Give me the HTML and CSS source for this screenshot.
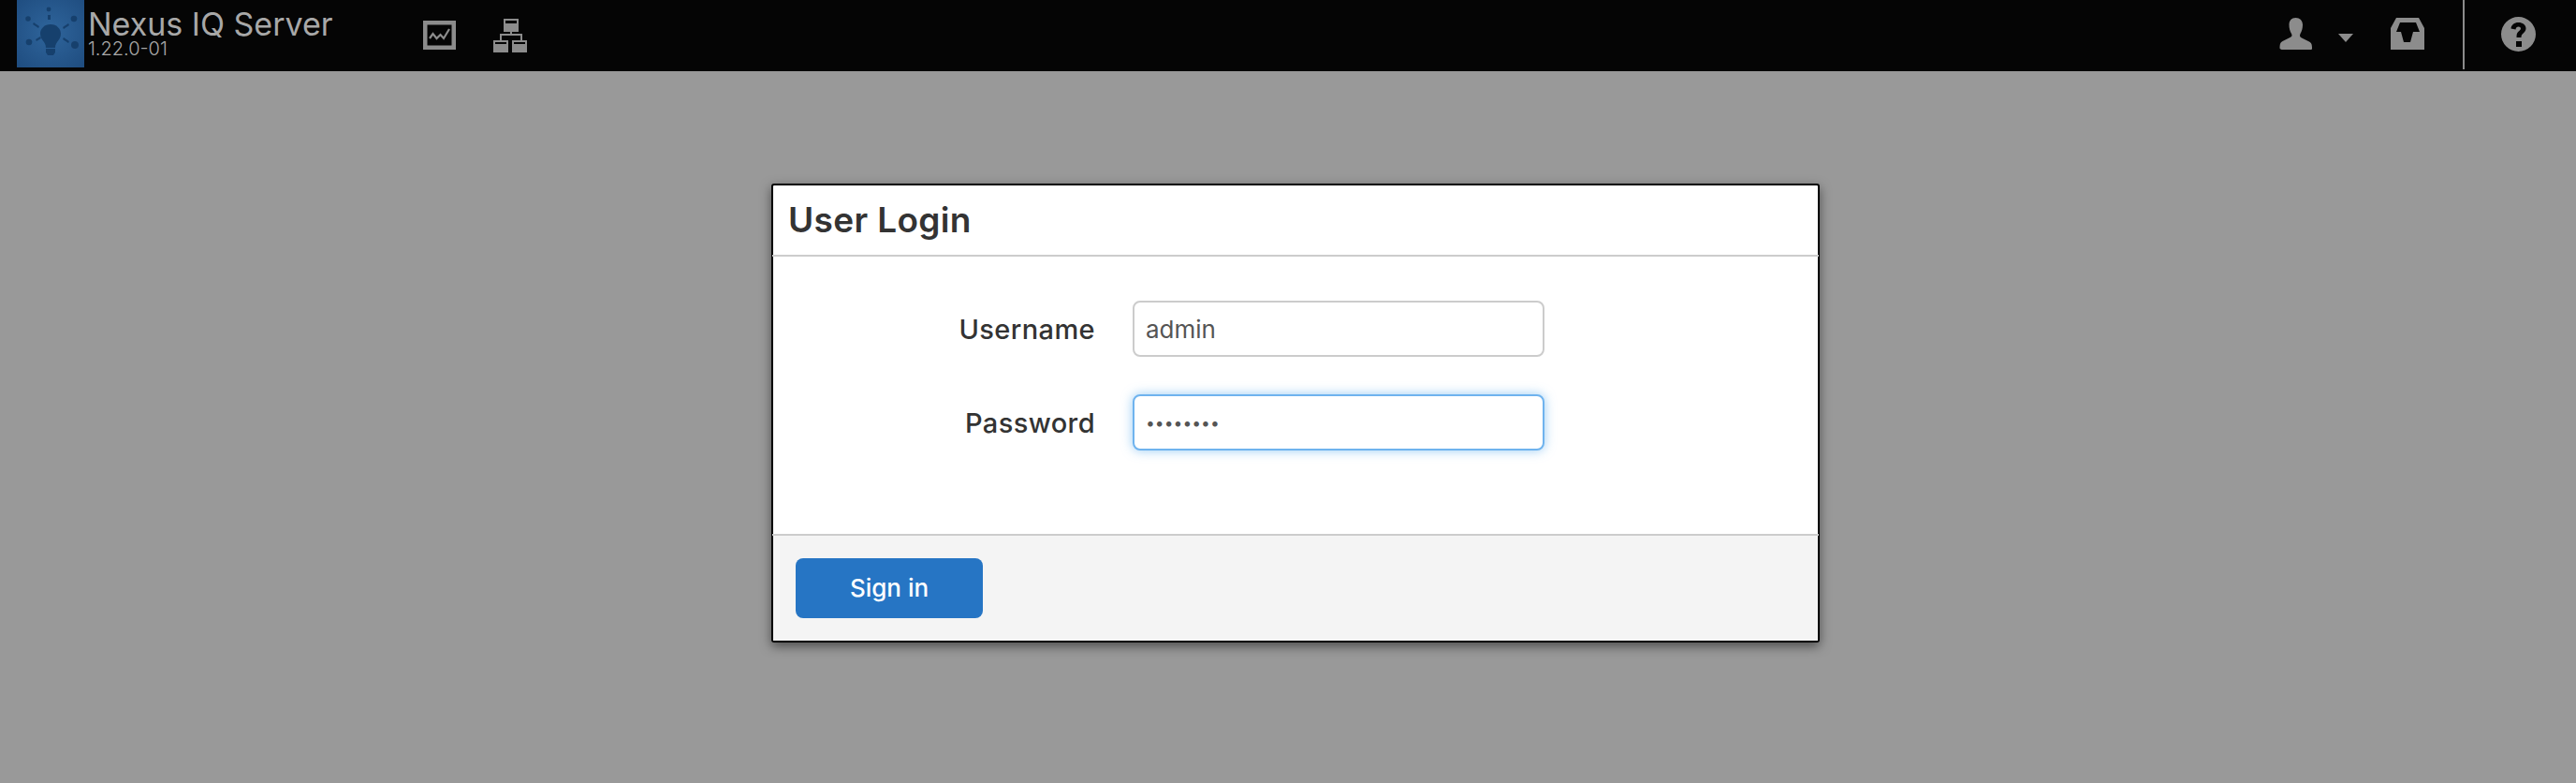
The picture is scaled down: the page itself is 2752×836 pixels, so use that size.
FILE: index.html
```html
<!DOCTYPE html>
<html lang="en">
<head>
<meta charset="utf-8">
<title>Nexus IQ Server</title>
<link rel="stylesheet" href="styles.css">
</head>
<body>
<header class="topbar">
  <div class="brand">
    <svg class="logo" viewBox="0 0 72 72" aria-hidden="true">
      <defs>
        <radialGradient id="lg" cx="50%" cy="48%" r="70%">
          <stop offset="0" stop-color="#2f659c"/>
          <stop offset="1" stop-color="#1f4d80"/>
        </radialGradient>
        <filter id="bl"><feGaussianBlur stdDeviation="0.7"/></filter>
      </defs>
      <rect width="72" height="72" fill="url(#lg)"/>
      <g fill="#17406d" filter="url(#bl)">
        <path d="M36 26c-7 0-11 5-11 10 0 4 2 6 4 9 1.500 2 2 4 2 6h10c0-2 .5-4 2-6 2-3 4-5 4-9 0-5-4-10-11-10z"/>
        <path d="M31 52h10v4l-2 3h-6l-2-3z"/>
        <circle cx="34" cy="10" r="2.400"/>
        <rect x="33" y="16" width="3" height="5"/>
        <circle cx="12" cy="20" r="2.800"/>
        <circle cx="61" cy="20" r="3.300"/>
        <circle cx="13" cy="45" r="3.300"/>
        <circle cx="62" cy="48" r="4"/>
        <path d="M18 24l6 4-1 2-6-4z"/>
        <path d="M49 29l6-4 1 2-6 4z"/>
        <path d="M20 42l5-3 1 2-5 3z"/>
        <path d="M50 40l6 4-1 2-6-4z"/>
      </g>
    </svg>
    <div class="brand-text">
      <span class="brand-name">Nexus IQ Server</span>
      <span class="brand-version">1.22.0-01</span>
    </div>
  </div>
  <nav class="nav-main">
    <svg class="icon i-chart" viewBox="0 0 35 31" aria-hidden="true">
      <path fill="#8c8c8c" fill-rule="evenodd" d="M0 0h35v31H0zM4.500 4.500v22h26v-22z"/>
      <path fill="none" stroke="#8c8c8c" stroke-width="2.200" d="M7 19l3.500-5 4 5 4-4 3.500 4 6-10"/>
    </svg>
    <svg class="icon i-tree" viewBox="0 0 36 36" aria-hidden="true">
      <path fill="#8c8c8c" fill-rule="evenodd" d="M11 0h16v14H11zM13 2v3h12V2zM0 23h16v13H0zM2 25v2h12v-2zM20 23h16v13H20zM22 25v2h12v-2z"/>
      <path fill="none" stroke="#8c8c8c" stroke-width="2" d="M19 14v3M8 23v-6h22v6"/>
    </svg>
  </nav>
  <div class="nav-tools">
    <svg class="icon i-user" viewBox="0 0 35 34" aria-hidden="true">
      <path fill="#8c8c8c" d="M17.500 0c4.500 0 7.500 3 7.500 7.500 0 4-1 7-2.500 9.500-1 2-.5 3.500 1.500 4.500l8 4c2 1 3 2.500 3 7 0 1-.5 1.500-1.500 1.500h-31C1 33.500.5 33 .5 32c0-4.500 1-6 3-7l8-4c2-1 2.500-2 1.500-4-1.500-2.500-2.500-5.500-2.500-9.500C10.500 3 13 0 17.500 0z"/>
    </svg>
    <svg class="icon i-caret" viewBox="0 0 16 9" aria-hidden="true"><path fill="#8c8c8c" d="M0 0h16l-8 9z"/></svg>
    <svg class="icon i-inbox" viewBox="0 0 36 34" aria-hidden="true">
      <path fill="#8c8c8c" fill-rule="evenodd" d="M6 0h24l6 11v23H0V11zM10 5L6 15h5l3 11h7l3-11h7L27 5z"/>
    </svg>
    <div class="tool-divider"></div>
    <svg class="icon i-help" viewBox="0 0 37 37" aria-hidden="true">
      <path fill="#8c8c8c" fill-rule="evenodd" d="M18.500 0a18.500 18.500 0 1 1 0 37a18.500 18.500 0 0 1 0-37zM16 26v6h6v-6zM18.500 6c-4.500 0-7.500 2.500-8 6.500l5 1c.3-2 1.300-3 3-3 1.500 0 2.500.8 2.500 2 0 1-.7 1.700-2 2.800-2 1.600-2.500 3-2.500 6.700h5c0-2.500.5-3.200 2.200-4.600 1.800-1.500 2.800-3 2.800-5.100C26.500 8.500 23 6 18.500 6z"/>
    </svg>
  </div>
</header>
<main class="stage">
  <form class="dialog">
    <h1 class="dialog-title">User Login</h1>
    <div class="dialog-body">
      <div class="field">
        <label class="field-label" for="u">Username</label>
        <input class="field-input" id="u" type="text" value="admin">
      </div>
      <div class="field">
        <label class="field-label" for="p">Password</label>
        <input class="field-input is-secret" id="p" type="password" value="password">
      </div>
    </div>
    <div class="dialog-footer">
      <button class="btn-primary" type="button">Sign in</button>
    </div>
  </form>
</main>
</body>
</html>
```
FILE: styles.css
```css
* { box-sizing: border-box; }
html, body { height: 100%; }
body {
  margin: 0;
  background: #999;
  font-family: "Inter", "Liberation Sans", sans-serif;
  overflow: hidden;
  display: flex;
  flex-direction: column;
}
.topbar {
  height: 76px;
  flex: none;
  background: #050505;
  display: flex;
  align-items: flex-start;
  padding-left: 18px;
}
.brand { display: flex; gap: 4px; width: 434px; }
.logo { width: 72px; height: 72px; display: block; }
.brand-text { display: flex; flex-direction: column; padding-top: 9px; }
.brand-name { color: #a8a8a8; font-size: 34px; line-height: 34px; }
.brand-version { color: #a8a8a8; font-size: 20px; font-weight: 300; line-height: 18px; }
.icon { display: block; flex: none; }
.nav-main { display: flex; align-items: flex-start; }
.i-chart { width: 35px; height: 31px; margin-top: 22px; }
.i-tree { width: 36px; height: 36px; margin-top: 20px; margin-left: 40px; }
.nav-tools { display: flex; align-items: flex-start; margin-left: auto; padding-right: 43px; }
.i-user { width: 35px; height: 34px; margin-top: 19px; }
.i-caret { width: 16px; height: 9px; margin-top: 36px; margin-left: 28px; }
.i-inbox { width: 36px; height: 34px; margin-top: 19px; margin-left: 40px; }
.tool-divider { width: 2px; height: 74px; background: #8c8c8c; margin-left: 41px; }
.i-help { width: 37px; height: 37px; margin-top: 18px; margin-left: 39px; }
.stage { flex: 1; padding: 120px 0 0 824px; }
.dialog {
  width: 1120px;
  height: 490px;
  border: 2px solid #000;
  border-radius: 3px;
  background: #fff;
  box-shadow: 0 4px 12px rgba(0,0,0,.5);
  display: flex;
  flex-direction: column;
}
.dialog-title {
  margin: 0 -1px;
  height: 76px;
  flex: none;
  border-bottom: 2px solid #ccc;
  padding-left: 17px;
  color: #333;
  font-size: 37px;
  font-weight: 600;
  letter-spacing: .35px;
  line-height: 74px;
}
.dialog-body {
  flex: 1;
  margin: 0 -1px;
  border-bottom: 2px solid #ccc;
  padding-top: 47px;
  display: flex;
  flex-direction: column;
  gap: 40px;
}
.field { display: flex; align-items: center; height: 60px; }
.field-label {
  width: 345px;
  text-align: right;
  color: #333;
  font-size: 29px;
  font-weight: 500;
  letter-spacing: .4px;
}
.field-input {
  width: 440px;
  height: 60px;
  margin-left: 40px;
  padding: 0 12px;
  border: 2px solid #ccc;
  border-radius: 8px;
  background: #fff;
  color: #555;
  font-family: inherit;
  font-size: 26px;
  outline: none;
}
.is-secret {
  font-size: 17.5px;
  border-color: #6fb3ee;
  box-shadow: 0 0 12px rgba(82,168,236,.6);
}
.dialog-footer {
  height: 112px;
  flex: none;
  background: #f4f4f4;
  padding: 24px 0 0 24px;
}
.btn-primary {
  display: block;
  width: 200px;
  height: 64px;
  padding: 0 0 2px;
  border: 0;
  border-radius: 8px;
  background: #2675c4;
  color: #fff;
  font-family: inherit;
  font-size: 26px;
  font-weight: 500;
}
```
